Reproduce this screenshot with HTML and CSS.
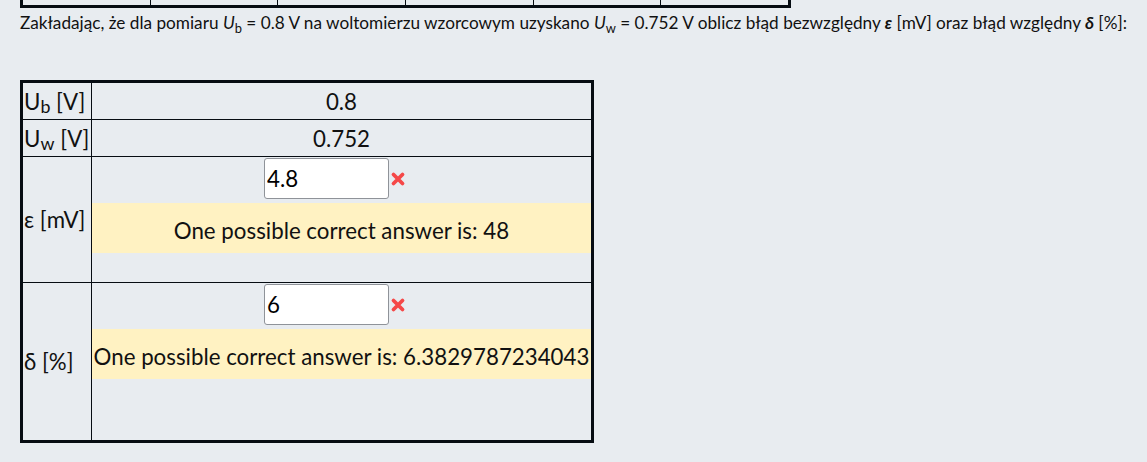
FILE: index.html
```html
<!DOCTYPE html>
<html lang="pl">
<head>
<meta charset="utf-8">
<link rel="stylesheet" href="styles.css">
</head>
<body>
<div class="page">
  <div class="prev-table">
    <div class="prev-cell"></div>
    <div class="prev-cell"></div>
    <div class="prev-cell"></div>
    <div class="prev-cell"></div>
    <div class="prev-cell"></div>
    <div class="prev-cell last"></div>
  </div>
  <p class="question">Zakładając, że dla pomiaru <i>U</i><sub>b</sub> = 0.8 V na woltomierzu wzorcowym uzyskano <i>U</i><sub>w</sub> = 0.752 V oblicz błąd bezwzględny <b><i>ε</i></b> [mV] oraz błąd względny <b><i>δ</i></b> [%]:</p>
  <table class="grid">
    <tr class="row-short">
      <td class="label">U<sub>b</sub> [V]</td>
      <td class="value">0.8</td>
    </tr>
    <tr class="row-short">
      <td class="label">U<sub>w</sub> [V]</td>
      <td class="value">0.752</td>
    </tr>
    <tr class="row-eps">
      <td class="label">ε [mV]</td>
      <td class="answer">
        <div class="answer-line">
          <input class="field" type="text" value="4.8">
          <svg class="wrong" width="16" height="16" viewBox="0 0 16 16"><path d="M3.5 3.5 L12.5 12.5 M12.5 3.5 L3.5 12.5" stroke="#f54848" stroke-width="3.8" stroke-linecap="round"/></svg>
        </div>
        <div class="feedback">One possible correct answer is: 48</div>
      </td>
    </tr>
    <tr class="row-delta">
      <td class="label">δ [%]</td>
      <td class="answer">
        <div class="answer-line">
          <input class="field" type="text" value="6">
          <svg class="wrong" width="16" height="16" viewBox="0 0 16 16"><path d="M3.5 3.5 L12.5 12.5 M12.5 3.5 L3.5 12.5" stroke="#f54848" stroke-width="3.8" stroke-linecap="round"/></svg>
        </div>
        <div class="feedback">One possible correct answer is: 6.3829787234043</div>
      </td>
    </tr>
  </table>
</div>
</body>
</html>
```

FILE: styles.css
```css
html, body {
  margin: 0;
  padding: 0;
  background: #e8ecf0;
}
body {
  font-family: Lato, "Liberation Sans", sans-serif;
  color: #111;
}
.page {
  padding-left: 20px;
}
.prev-table {
  display: flex;
  width: 765px;
  height: 5px;
  border: 3px solid #060c12;
  border-top: none;
}
.prev-cell {
  flex: 1;
  border-right: 1px solid #060c12;
}
.prev-cell.last {
  border-right: none;
}
.question {
  margin: 5px 0 0 0;
  font-size: 17.2px;
  line-height: 20px;
}
.question sub {
  font-size: 0.75em;
  line-height: 0;
}
.grid {
  margin-top: 47px;
  border: 3px solid #060c12;
  border-spacing: 0;
  width: 574px;
  font-size: 22.3px;
}
.grid td {
  padding: 0;
  border-bottom: 1px solid #060c12;
}
.grid tr:last-child td {
  border-bottom: none;
}
.label {
  width: 69px;
  border-right: 1px solid #060c12;
  padding-left: 1px !important;
  vertical-align: middle;
  white-space: nowrap;
}
.label sub {
  font-size: 0.8em;
  line-height: 0;
  vertical-align: -0.15em;
}
.value {
  text-align: center;
  vertical-align: middle;
}
.row-short td {
  height: 37px;
  box-sizing: border-box;
}
.row-eps td {
  height: 126px;
  box-sizing: border-box;
}
.row-delta td {
  height: 157px;
  box-sizing: border-box;
}
.answer {
  vertical-align: top;
  padding-top: 1px !important;
}
.answer-line {
  display: flex;
  justify-content: center;
  align-items: center;
  gap: 1px;
  padding-right: 13px;
  height: 41px;
}
.field {
  box-sizing: border-box;
  width: 125px;
  height: 41px;
  margin: 0;
  border: 1px solid #8f9399;
  border-radius: 3px;
  background: #fff;
  font-family: Lato, "Liberation Sans", sans-serif;
  font-size: 22.3px;
  color: #000;
  padding: 0 2px;
}
.wrong {
  display: block;
}
.feedback {
  box-sizing: border-box;
  margin-top: 4px;
  height: 50px;
  padding-top: 5px;
  background: #fff2c2;
  display: flex;
  align-items: center;
  justify-content: center;
  white-space: nowrap;
}
```
